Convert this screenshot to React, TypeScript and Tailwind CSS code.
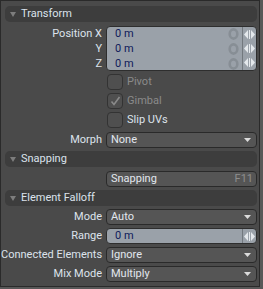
import React from 'react';

const labelCls = 'w-[101px] shrink-0 text-right text-[#dde3ec] leading-[16px] whitespace-nowrap';

const Header = ({ title, className = '' }: { title: string; className?: string }) => (
  <div className={`ml-[4px] mr-[2px] h-[16px] rounded-[5px] bg-[#3d3d3d] flex items-center ${className}`}>
    <svg width="6" height="5" viewBox="0 0 6 5" className="ml-[5px]">
      <polygon points="0,0 6,0 3,5" fill="#7d7d7d" />
    </svg>
    <span className="ml-[5px] text-[#dbe2ec] leading-[16px]">{title}</span>
  </div>
);

const Row = ({ label, children, className = '' }: { label: string; children: React.ReactNode; className?: string }) => (
  <div className={`flex h-[16px] items-center ${className}`}>
    <div className={labelCls}>{label}</div>
    <div className="ml-[4px] mr-[2px] flex-1 h-full">{children}</div>
  </div>
);

const Caret = () => (
  <svg width="7" height="4" viewBox="0 0 7 4" className="mr-[5px]">
    <polygon points="0,0 7,0 3.5,4" fill="#dcdcdc" />
  </svg>
);

const Dropdown = ({ value }: { value: string }) => (
  <div className="h-full rounded-[4px] border border-[#2a2a2a] bg-[#555555] flex items-center justify-between">
    <span className="ml-[4px] text-[#e2e7ee] leading-[14px]">{value}</span>
    <Caret />
  </div>
);

const Arrows = () => (
  <svg width="11" height="9" viewBox="0 0 11 9">
    <polygon points="4,0 4,9 0,4.5" fill="#e4e8ec" />
    <rect x="5" y="0" width="1" height="9" fill="#e4e8ec" />
    <polygon points="7,0 7,9 11,4.5" fill="#e4e8ec" />
  </svg>
);

const Ghost = () => (
  <svg width="11" height="12" viewBox="0 0 11 12">
    <ellipse cx="5.5" cy="6" rx="3.8" ry="4.6" fill="none" stroke="#878e95" strokeWidth="2.6" />
  </svg>
);

const Check = ({ label, checked, disabled }: { label: string; checked?: boolean; disabled?: boolean }) => (
  <div className="flex h-[16px] items-center">
    <div className="w-[101px] shrink-0" />
    <div className="ml-[5px] w-[16px] h-[16px] rounded-[4px] border border-[#333333] bg-[#4f4f4f] flex items-center justify-center">
      {checked && (
        <svg width="11" height="10" viewBox="0 0 11 10">
          <polyline points="1.5,5.5 4,8.5 9.5,1" fill="none" stroke="#8a8a8a" strokeWidth="1.6" />
        </svg>
      )}
    </div>
    <span className={`ml-[4px] leading-[16px] ${disabled ? 'text-[#8a8a8a]' : 'text-[#dde3ec]'}`}>{label}</span>
  </div>
);

export default function App() {
  const axes = ['Position X', 'Y', 'Z'];
  return (
    <div className="w-[263px] h-[289px] bg-[#585858]" style={{ fontFamily: 'Roboto, "Liberation Sans", sans-serif' }}>
      <div className="w-[260px] h-[287px] border border-[#2a2a2a] bg-[#4a4a4a] text-[11px] flex flex-col">
        <Header title="Transform" className="mt-[5px]" />

        <div className="mt-[4px] flex h-[45px]">
          <div className="w-[101px] shrink-0 flex flex-col justify-center">
            {axes.map((a) => (
              <div key={a} className="h-[15px] text-right text-[#dde3ec] leading-[15px] whitespace-nowrap">{a}</div>
            ))}
          </div>
          <div className="ml-[4px] mr-[2px] flex-1 rounded-[4px] border border-[#2e2e2e] bg-[#9aa1a9] flex">
            <div className="flex-1 flex flex-col justify-center">
              {axes.map((a) => (
                <div key={a} className="h-[15px] flex items-center">
                  <span className="ml-[8px] flex-1 text-[#0e1a5a] leading-[15px]">0 m</span>
                  <div className="w-[14px] mr-[2px] flex justify-center">
                    <Ghost />
                  </div>
                </div>
              ))}
            </div>
            <div className="w-[14px] border-l border-[#72787e] flex flex-col justify-center items-center">
              {axes.map((a) => (
                <div key={a} className="h-[15px] flex items-center"><Arrows /></div>
              ))}
            </div>
          </div>
        </div>

        <div className="mt-[3px]"><Check label="Pivot" disabled /></div>
        <div className="mt-[3px]"><Check label="Gimbal" checked disabled /></div>
        <div className="mt-[3px]"><Check label="Slip UVs" /></div>

        <Row label="Morph" className="mt-[4px]">
          <Dropdown value="None" />
        </Row>

        <Header title="Snapping" className="mt-[3px]" />

        <Row label="" className="mt-[4px]">
          <div className="h-full rounded-[4px] border border-[#2a2a2a] bg-[#555555] flex items-center justify-between">
            <span className="ml-[4px] text-[#e2e7ee] leading-[14px]">Snapping</span>
            <span className="mr-[3px] text-[#8e8e8e] leading-[14px]">F11</span>
          </div>
        </Row>

        <Header title="Element Falloff" className="mt-[3px]" />

        <Row label="Mode" className="mt-[3px]">
          <Dropdown value="Auto" />
        </Row>
        <Row label="Range" className="mt-[3px]">
          <div className="h-full rounded-[4px] border border-[#2e2e2e] bg-[#9aa1a9] flex items-center">
            <span className="ml-[8px] flex-1 text-[#0e1a5a] leading-[14px]">0 m</span>
            <div className="w-[14px] h-full border-l border-[#72787e] flex items-center justify-center">
              <Arrows />
            </div>
          </div>
        </Row>
        <Row label="Connected Elements" className="mt-[3px]">
          <Dropdown value="Ignore" />
        </Row>
        <Row label="Mix Mode" className="mt-[3px]">
          <Dropdown value="Multiply" />
        </Row>
      </div>
    </div>
  );
}
